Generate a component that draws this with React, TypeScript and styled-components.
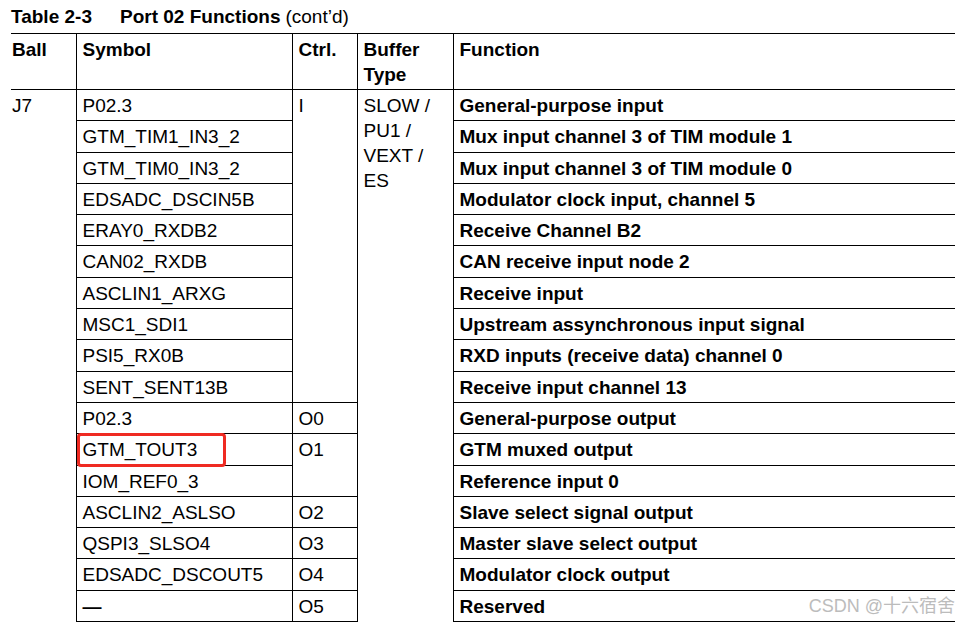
import React from 'react';
import styled, { createGlobalStyle } from 'styled-components';

type Row = {
  symbol: string;
  fn: string;
  ctrl?: { label: string; span: number };
  dash?: boolean;
};

const rows: Row[] = [
  { symbol: 'P02.3', fn: 'General-purpose input', ctrl: { label: 'I', span: 10 } },
  { symbol: 'GTM_TIM1_IN3_2', fn: 'Mux input channel 3 of TIM module 1' },
  { symbol: 'GTM_TIM0_IN3_2', fn: 'Mux input channel 3 of TIM module 0' },
  { symbol: 'EDSADC_DSCIN5B', fn: 'Modulator clock input, channel 5' },
  { symbol: 'ERAY0_RXDB2', fn: 'Receive Channel B2' },
  { symbol: 'CAN02_RXDB', fn: 'CAN receive input node 2' },
  { symbol: 'ASCLIN1_ARXG', fn: 'Receive input' },
  { symbol: 'MSC1_SDI1', fn: 'Upstream assynchronous input signal' },
  { symbol: 'PSI5_RX0B', fn: 'RXD inputs (receive data) channel 0' },
  { symbol: 'SENT_SENT13B', fn: 'Receive input channel 13' },
  { symbol: 'P02.3', fn: 'General-purpose output', ctrl: { label: 'O0', span: 1 } },
  { symbol: 'GTM_TOUT3', fn: 'GTM muxed output', ctrl: { label: 'O1', span: 2 } },
  { symbol: 'IOM_REF0_3', fn: 'Reference input 0' },
  { symbol: 'ASCLIN2_ASLSO', fn: 'Slave select signal output', ctrl: { label: 'O2', span: 1 } },
  { symbol: 'QSPI3_SLSO4', fn: 'Master slave select output', ctrl: { label: 'O3', span: 1 } },
  { symbol: 'EDSADC_DSCOUT5', fn: 'Modulator clock output', ctrl: { label: 'O4', span: 1 } },
  { symbol: '—', fn: 'Reserved', ctrl: { label: 'O5', span: 1 }, dash: true },
];

const GlobalStyle = createGlobalStyle`
  html, body {
    margin: 0;
    padding: 0;
    background: #ffffff;
    overflow: hidden;
  }
  body {
    font-family: "Liberation Sans", Arial, sans-serif;
    color: #000;
  }
`;

const Page = styled.div`
  position: relative;
  width: 960px;
  height: 622px;
  overflow: hidden;
  padding-left: 11px;
  box-sizing: border-box;
`;

const Caption = styled.div`
  display: flex;
  align-items: baseline;
  height: 33px;
  padding-top: 6px;
  box-sizing: border-box;
  font-size: 19px;
  line-height: 22px;
`;

const CaptionNo = styled.span`
  font-weight: bold;
  width: 109px;
`;

const CaptionTitle = styled.span`
  font-weight: bold;
  margin-right: 5px;
`;

const Table = styled.table`
  border-collapse: collapse;
  table-layout: fixed;
  width: 944px;
  font-size: 19px;
  line-height: 25px;
  border-top: 1px solid #000;
`;

const HeadCell = styled.th<{ $first?: boolean }>`
  font-weight: bold;
  text-align: left;
  vertical-align: top;
  height: 56px;
  padding: 3px 0 0 ${(p) => (p.$first ? '1px' : '6px')};
  border-bottom: 1px solid #000;
  border-left: ${(p) => (p.$first ? 'none' : '1px solid #000')};
  box-sizing: border-box;
`;

const Cell = styled.td<{ $bold?: boolean; $first?: boolean; $open?: boolean }>`
  font-weight: ${(p) => (p.$bold ? 'bold' : 'normal')};
  vertical-align: top;
  height: 31.3px;
  padding: 3px 0 0 ${(p) => (p.$first ? '1px' : '6px')};
  border-left: ${(p) => (p.$first ? 'none' : '1px solid #000')};
  border-bottom: ${(p) => (p.$open ? 'none' : '1px solid #000')};
  box-sizing: border-box;
  white-space: nowrap;
`;

const Dash = styled.span`
  font-weight: bold;
`;

const Highlight = styled.div`
  position: absolute;
  left: 77px;
  top: 433px;
  width: 149px;
  height: 34px;
  border: 3px solid #ef2a22;
  border-radius: 4px;
  box-sizing: border-box;
  pointer-events: none;
`;

const Watermark = styled.div`
  position: absolute;
  right: 5px;
  bottom: 6px;
  font-family: "Liberation Sans", "Noto Sans CJK SC", sans-serif;
  font-size: 18px;
  line-height: 20px;
  color: #bcbcbc;
`;

export default function App() {
  return (
    <Page>
      <GlobalStyle />
      <Caption>
        <CaptionNo>Table 2-3</CaptionNo>
        <CaptionTitle>Port 02 Functions</CaptionTitle>
        <span>(cont’d)</span>
      </Caption>
      <Table>
        <colgroup>
          <col style={{ width: 65 }} />
          <col style={{ width: 216 }} />
          <col style={{ width: 65 }} />
          <col style={{ width: 96 }} />
          <col style={{ width: 502 }} />
        </colgroup>
        <thead>
          <tr>
            <HeadCell $first>Ball</HeadCell>
            <HeadCell>Symbol</HeadCell>
            <HeadCell>Ctrl.</HeadCell>
            <HeadCell>
              Buffer
              <br />
              Type
            </HeadCell>
            <HeadCell>Function</HeadCell>
          </tr>
        </thead>
        <tbody>
          {rows.map((r, i) => (
            <tr key={i}>
              {i === 0 && (
                <Cell $first $open rowSpan={rows.length}>
                  J7
                </Cell>
              )}
              <Cell>{r.dash ? <Dash>{r.symbol}</Dash> : r.symbol}</Cell>
              {r.ctrl && <Cell rowSpan={r.ctrl.span}>{r.ctrl.label}</Cell>}
              {i === 0 && (
                <Cell $open rowSpan={rows.length}>
                  SLOW /<br />
                  PU1 /<br />
                  VEXT /<br />
                  ES
                </Cell>
              )}
              <Cell $bold>{r.fn}</Cell>
            </tr>
          ))}
        </tbody>
      </Table>
      <Highlight />
      <Watermark>CSDN @十六宿舍</Watermark>
    </Page>
  );
}
